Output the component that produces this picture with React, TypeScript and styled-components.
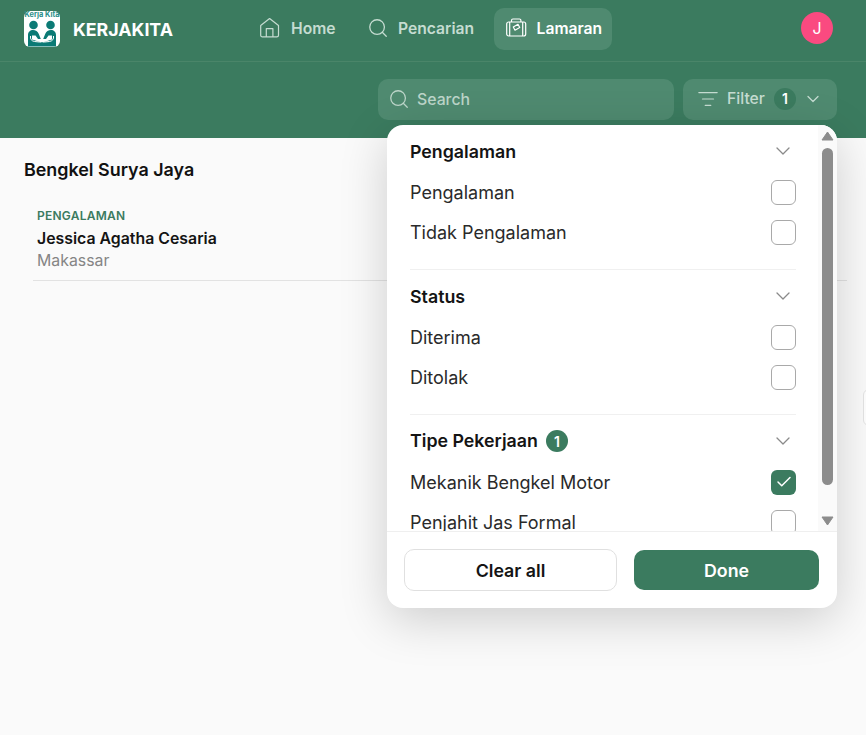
import { Check, ChevronDown, ListFilter, Search } from "lucide-react";
import styled, { createGlobalStyle } from "styled-components";

const GREEN = "#3b7b5f";

const GlobalStyle = createGlobalStyle`
  html, body {
    margin: 0;
    padding: 0;
    height: 100%;
    background: #fafafa;
    overflow: hidden;
    font-family: Inter, "Liberation Sans", sans-serif;
  }
  * { box-sizing: border-box; }
`;

const Page = styled.div`
  position: relative;
  width: 866px;
  height: 735px;
  overflow: hidden;
  background: #fafafa;
`;

const Header = styled.header`
  background: ${GREEN};
`;

const TopBar = styled.div`
  height: 62px;
  padding: 8px 33px 0 24px;
  display: flex;
  align-items: flex-start;
  border-bottom: 1px solid #4a8569;
`;

const Brand = styled.div`
  width: 224px;
  height: 42px;
  display: flex;
  align-items: center;
  gap: 13px;
  color: #fff;
  font-size: 17.8px;
  font-weight: 700;
`;

const LogoBox = styled.svg`
  width: 36px;
  height: 36px;
  flex-shrink: 0;
  display: block;
`;

const Nav = styled.nav`
  flex: 1;
  display: flex;
  gap: 9.5px;
`;

const NavItem = styled.a<{ $active?: boolean }>`
  height: 42px;
  padding: 0 10px 2px 12px;
  display: flex;
  align-items: center;
  gap: 9px;
  border-radius: 10px;
  font-size: 15.65px;
  font-weight: 600;
  color: ${(p) => (p.$active ? "#fff" : "#c5dcd1")};
  background: ${(p) => (p.$active ? "#4f8a70" : "transparent")};
  svg {
    flex-shrink: 0;
  }
`;

const Avatar = styled.div`
  width: 32px;
  height: 32px;
  margin-top: 4px;
  border-radius: 50%;
  background: #fa4a80;
  color: #fff;
  font-size: 16px;
  display: flex;
  align-items: center;
  justify-content: center;
`;

const Toolbar = styled.div`
  height: 76px;
  padding: 17px 29px 0 378px;
  display: flex;
  gap: 9px;
`;

const SearchField = styled.div`
  width: 296px;
  height: 41px;
  padding: 0 10px 1px;
  display: flex;
  align-items: center;
  gap: 7px;
  border-radius: 10px;
  background: #4f8a70;
  color: #bcd5c9;
  font-size: 15.8px;
  font-weight: 500;
`;

const FilterWrap = styled.div`
  position: relative;
`;

const FilterButton = styled.div`
  width: 154px;
  height: 41px;
  padding: 0 14px 2px;
  display: flex;
  align-items: center;
  border-radius: 10px;
  background: #4f8a70;
  color: #c5dcd1;
  font-size: 15.7px;
  font-weight: 500;
  svg:first-child {
    flex-shrink: 0;
    margin-right: 8px;
  }
  svg:last-child {
    flex-shrink: 0;
    margin-left: 7px;
  }
`;

const FilterCount = styled.span`
  width: 22px;
  height: 22px;
  margin-left: 9px;
  flex-shrink: 0;
  border-radius: 50%;
  background: ${GREEN};
  color: #fff;
  font-size: 14px;
  font-weight: 600;
  display: flex;
  align-items: center;
  justify-content: center;
`;

const Content = styled.main`
  padding: 21px 24px 0;
`;

const Title = styled.h1`
  margin: 0;
  font-size: 17.9px;
  line-height: 22px;
  font-weight: 600;
  color: #111;
`;

const Applicant = styled.div`
  margin: 26px -5px 0 9px;
  height: 74px;
  padding: 1px 4px 0;
  border-bottom: 1px solid #e2e2e2;
`;

const Tag = styled.div`
  font-size: 12px;
  line-height: 16px;
  font-weight: 600;
  color: ${GREEN};
  letter-spacing: 0.25px;
`;

const Name = styled.div`
  margin-top: 5px;
  font-size: 15.85px;
  line-height: 20px;
  font-weight: 600;
  color: #141414;
`;

const City = styled.div`
  margin-top: 2px;
  font-size: 15.85px;
  line-height: 20px;
  color: #858585;
`;

const EdgeTab = styled.div`
  position: absolute;
  left: 863px;
  top: 389px;
  width: 20px;
  height: 37px;
  border: 1px solid #e4e4e4;
  border-radius: 6px;
  background: #fff;
`;

const Popover = styled.div`
  position: absolute;
  top: 46px;
  right: 0;
  width: 450px;
  height: 483px;
  display: flex;
  flex-direction: column;
  border-radius: 16px;
  background: #fff;
  overflow: hidden;
  box-shadow: 0 12px 48px rgba(0, 0, 0, 0.18);
  z-index: 5;
`;

const ScrollBody = styled.div`
  flex: 1;
  min-height: 0;
  display: flex;
`;

const Sections = styled.div`
  flex: 1;
  min-width: 0;
  height: 406px;
  overflow: hidden;
  padding: 0 22px 0 23px;
`;

const Section = styled.section`
  height: 145px;
  padding-top: 13px;
  border-bottom: 1px solid #f0f0f0;
  &:last-child {
    padding-top: 12px;
  }
`;

const SectionHead = styled.div`
  min-height: 26px;
  margin-bottom: 8px;
  display: flex;
  align-items: center;
  font-size: 17.8px;
  font-weight: 600;
  color: #141414;
  svg {
    margin-left: auto;
    margin-right: 1px;
    color: #8a8a8a;
  }
`;

const Badge = styled.span`
  width: 22px;
  height: 22px;
  margin: 3px 0 2px 8px;
  border-radius: 50%;
  background: ${GREEN};
  color: #fff;
  font-size: 14px;
  font-weight: 600;
  display: flex;
  align-items: center;
  justify-content: center;
`;

const Row = styled.label`
  height: 40px;
  display: flex;
  align-items: center;
  justify-content: space-between;
  font-size: 18px;
  color: #2a2a2a;
`;

const Box = styled.span<{ $checked?: boolean }>`
  width: 25px;
  height: 25px;
  border-radius: 6px;
  border: ${(p) => (p.$checked ? "none" : "1.5px solid #a9a9a9")};
  background: ${(p) => (p.$checked ? GREEN : "#fff")};
  color: #fff;
  display: flex;
  align-items: center;
  justify-content: center;
`;

const Track = styled.div`
  width: 19px;
  height: 406px;
  padding: 6px 3px 5px;
  background: #fafafa;
  display: flex;
  flex-direction: column;
  align-items: center;
`;

const Thumb = styled.div`
  width: 11px;
  height: 337px;
  margin: 7px 0 31px;
  border-radius: 6px;
  background: #8c8c8c;
`;

const Arrow = styled.svg`
  width: 13px;
  height: 10px;
  flex-shrink: 0;
  fill: #8c8c8c;
  stroke: #8c8c8c;
  stroke-width: 1;
  stroke-linejoin: round;
`;

const Footer = styled.div`
  height: 77px;
  padding: 17px 18px 0 17px;
  display: flex;
  gap: 17px;
  align-items: flex-start;
  border-top: 1px solid #efefef;
`;

const ClearButton = styled.button`
  width: 213px;
  height: 42px;
  border: 1px solid #e0e0e0;
  border-radius: 10px;
  background: #fff;
  color: #141414;
  font: 600 17.8px Inter, "Liberation Sans", sans-serif;
`;

const DoneButton = styled.button`
  width: 185px;
  height: 40px;
  margin-top: 1px;
  border: none;
  border-radius: 10px;
  background: ${GREEN};
  color: #fff;
  font: 600 17.8px Inter, "Liberation Sans", sans-serif;
`;

const Logo = () => (
  <LogoBox viewBox="0 0 36 36">
    <rect width="36" height="36" rx="6" fill="#fff" />
    <text x="18" y="6" fontSize="7.4" textAnchor="middle" fill="#2b8f8a" fontFamily="Inter, sans-serif">
      Kerja Kita
    </text>
    <circle cx="9.500" cy="14" r="4.300" fill="#0b7a75" />
    <circle cx="26.500" cy="14" r="4.300" fill="#0b7a75" />
    <path d="M4 35.500V24c0-3 2.200-5 5-5 2.600 0 4.800 1.500 5.800 4l2 5H14l-2.500-3.500H8v4l8 2.500h4l8-2.500v-4h-3.500L22 28h-2.800l2-5c1-2.500 3.200-4 5.800-4 2.800 0 5 2 5 5v11.500z" fill="#0b7a75" />
    <path
      d="M6.500 25c-.5 3 1 5 4 5.500l5 .5h2M29.500 25c.5 3-1 5-4 5.500l-5 .5h-2"
      fill="none"
      stroke="#fff"
      strokeWidth="1"
    />
  </LogoBox>
);

const HomeIcon = () => (
  <svg width="22" height="22" viewBox="0 0 22 22" fill="none" stroke="currentColor" strokeWidth="1.2" strokeLinejoin="round">
    <path d="M.7 8.500 9.600 1.500l8.900 7v9.700a1.700 1.700 0 0 1-1.700 1.700H2.400A1.700 1.700 0 0 1 .7 18.200z" />
    <path d="M6.300 19.900v-8.300h6.600v8.300" />
  </svg>
);

const CaseIcon = () => (
  <svg width="22" height="22" viewBox="0 0 22 22" fill="none" stroke="currentColor" strokeWidth="1.2" strokeLinejoin="round">
    <rect x="0.700" y="5" width="19" height="14" rx="2" />
    <path d="M3.700 5v14M16.700 5v14" />
    <path d="M5.500 5V3.400a1.400 1.400 0 0 1 1.400-1.400h6.600a1.400 1.400 0 0 1 1.400 1.400V5" />
    <path d="m7.300 10 4.700-2.700 1.700 3.200-4.700 2.700z" />
  </svg>
);

const options = [
  { title: "Pengalaman", items: [{ label: "Pengalaman" }, { label: "Tidak Pengalaman" }] },
  { title: "Status", items: [{ label: "Diterima" }, { label: "Ditolak" }] },
  {
    title: "Tipe Pekerjaan",
    count: 1,
    items: [{ label: "Mekanik Bengkel Motor", checked: true }, { label: "Penjahit Jas Formal" }],
  },
];

export default function App() {
  return (
    <Page>
      <GlobalStyle />
      <Header>
        <TopBar>
          <Brand>
            <Logo />
            KERJAKITA
          </Brand>
          <Nav>
            <NavItem>
              <HomeIcon />
              Home
            </NavItem>
            <NavItem>
              <Search size={22} strokeWidth={1.4} />
              Pencarian
            </NavItem>
            <NavItem $active>
              <CaseIcon />
              Lamaran
            </NavItem>
          </Nav>
          <Avatar>J</Avatar>
        </TopBar>
        <Toolbar>
          <SearchField>
            <Search size={22} strokeWidth={1.4} />
            Search
          </SearchField>
          <FilterWrap>
            <FilterButton>
              <ListFilter size={22} strokeWidth={1.3} />
              Filter
              <FilterCount>1</FilterCount>
              <ChevronDown size={20} strokeWidth={1.5} />
            </FilterButton>
            <Popover>
              <ScrollBody>
                <Sections>
                  {options.map((group) => (
                    <Section key={group.title}>
                      <SectionHead>
                        {group.title}
                        {group.count && <Badge>{group.count}</Badge>}
                        <ChevronDown size={24} strokeWidth={1.3} />
                      </SectionHead>
                      {group.items.map((item) => (
                        <Row key={item.label}>
                          {item.label}
                          <Box $checked={"checked" in item}>
                            {"checked" in item && <Check size={18} strokeWidth={2} />}
                          </Box>
                        </Row>
                      ))}
                    </Section>
                  ))}
                </Sections>
                <Track>
                  <Arrow viewBox="0 0 13 10">
                    <path d="M6.500 1 12 9H1z" />
                  </Arrow>
                  <Thumb />
                  <Arrow viewBox="0 0 13 10">
                    <path d="M6.500 9 12 1H1z" />
                  </Arrow>
                </Track>
              </ScrollBody>
              <Footer>
                <ClearButton>Clear all</ClearButton>
                <DoneButton>Done</DoneButton>
              </Footer>
            </Popover>
          </FilterWrap>
        </Toolbar>
      </Header>
      <Content>
        <Title>Bengkel Surya Jaya</Title>
        <Applicant>
          <Tag>PENGALAMAN</Tag>
          <Name>Jessica Agatha Cesaria</Name>
          <City>Makassar</City>
        </Applicant>
      </Content>
      <EdgeTab />
    </Page>
  );
}
